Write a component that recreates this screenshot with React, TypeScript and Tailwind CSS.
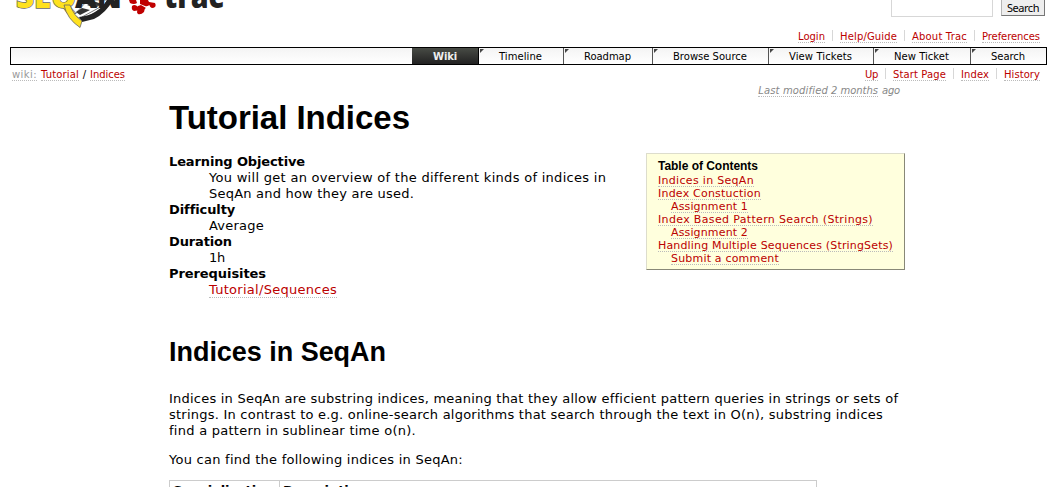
import React from "react";

type LineProps = { children: React.ReactNode; w: number; className?: string };

// One line of text justified to a fixed measure
function Line({ children, w, className = "" }: LineProps) {
  const ref = React.useRef<HTMLSpanElement>(null);
  const [spacing, setSpacing] = React.useState(0);
  React.useLayoutEffect(() => {
    const el = ref.current;
    if (!el) return;
    const n = (el.textContent || "").length;
    setSpacing((w - el.getBoundingClientRect().width) / n);
  }, [w]);
  return (
    <span ref={ref} className={"inline-block whitespace-nowrap " + className} style={{ letterSpacing: spacing }}>
      {children}
    </span>
  );
}

const link = "h-[13px] leading-[14px] text-[#bb0000] border-b border-dotted border-[#bbbbbb]";

function Menu({ items }: { items: [string, number][] }) {
  return (
    <div className="flex">
      {items.map(([t, w], i) => (
        <div key={t} className={"flex h-[13px] " + (i ? "ml-[7px] pl-[7px]" : "")}>
          {i > 0 && <span className="mr-[7px] -ml-[7px] h-[11px] w-px bg-[#d7d7d7]" />}
          <Line w={w} className={link}>{t}</Line>
        </div>
      ))}
    </div>
  );
}

const tabs: [string, string, number][] = [
  ["Timeline", "w-[85px]", 43],
  ["Roadmap", "w-[89px]", 47],
  ["Browse Source", "w-[116px]", 74],
  ["View Tickets", "w-[105px]", 63],
  ["New Ticket", "w-[97px]", 55],
  ["Search", "w-[75px]", 34],
];

const toc: [string, number, boolean][] = [
  ["Indices in SeqAn", 96, false],
  ["Index Constuction", 103, false],
  ["Assignment 1", 77, true],
  ["Index Based Pattern Search (Strings)", 215, false],
  ["Assignment 2", 77, true],
  ["Handling Multiple Sequences (StringSets)", 235, false],
  ["Submit a comment", 108, true],
];

function Logo() {
  return (
    <svg className="block h-[30px] w-[230px]" viewBox="0 0 230 30">
      <path d="M74 15L88 0H108L101 9L82 20Z" fill="#fff" stroke="#333" strokeWidth="0.6" />
      <path d="M76 12L82 8L90 10L80 15Z M87 5L93 1L102 4L95 8Z" fill="#333" />
      <path d="M82 17L104 5M90 3L106 8" fill="none" stroke="#555" strokeWidth="0.8" />
      <path d="M79 17Q98 15 107 0H113Q106 13 94 19L82 22Z" fill="#222" />
      <g fontFamily="Open Sans" fontWeight="800" fontSize="32">
        <text x="16" y="7.5" textLength="60" lengthAdjust="spacingAndGlyphs" fill="#ffe11f" stroke="#666" strokeWidth="1.4" paintOrder="stroke">SEQ</text>
        <text x="75" y="8" textLength="47" lengthAdjust="spacingAndGlyphs" fill="#222">AN</text>
      </g>
      <path d="M64 5Q67 19 80 27.5L82 21Q74 16 70 5Z" fill="#ffe11f" stroke="#666" strokeWidth="0.8" />
      <path d="M129 0H136L137 3Q134 5 130 3ZM132 6Q134 4 137 6L139 8Q138 11 134 11Q131 10 132 6ZM140 0H148L150 4Q148 7 145 6L140 4ZM141 6L145 8L144 12Q141 15 138 14Q136 12 138 10ZM149 2L155 3Q157 7 153 8Q149 8 149 2Z" fill="#c00000" />
      <path d="M138 6L141 5L146 8L140 12L136 10Z" fill="#c00000" />
      <text x="164" y="8" fontFamily="Open Sans" fontWeight="800" fontSize="32" textLength="60" lengthAdjust="spacingAndGlyphs" fill="#222">trac</text>
    </svg>
  );
}

export default function App() {
  return (
    <div className="h-[487px] w-[1057px] overflow-hidden bg-white text-black [font-family:Verdana,'DejaVu_Sans',sans-serif]">
      <header className="flex h-[30px] justify-between">
        <Logo />
        <div className="flex pr-3">
          <div className="mr-[8px] h-[17px] w-[102px] border border-t-0 border-[#d7d7d7]" />
          <div className="flex h-[16px] w-[44px] items-center justify-center border border-t-0 border-[#b5b5b5] border-r-[#777] border-b-[#777] bg-[#eeeeee] text-[11px]">
            <Line w={32} className="pt-[2px] [font-family:'Noto_Sans']">Search</Line>
          </div>
        </div>
      </header>
      <div className="flex h-[17px] justify-end pr-[17px] text-[10px]">
        <Menu items={[["Login", 27], ["Help/Guide", 57], ["About Trac", 55], ["Preferences", 58]]} />
      </div>
      <nav className="ml-[10px] flex h-[18px] w-[1037px] justify-end border border-black bg-linear-to-b from-[#f4f4f4] to-white text-[10px] leading-[18px]">
        <div className="h-4 w-[67px] border-r border-black bg-linear-to-b from-[#484b45] to-[#222] text-center font-bold text-[#eeeeee]">
          <Line w={24}>Wiki</Line>
        </div>
        {tabs.map(([t, cls, w], i) => (
          <div key={t} className={"flex h-4 " + cls + (i < 5 ? " border-r border-[#555]" : "")}>
            <svg className="mt-[1px] ml-[1px] h-1 w-1" viewBox="0 0 4 4"><path d="M0 0H4L0 4Z" fill="#444" /></svg>
            <div className="flex-1 pr-[6px] text-center"><Line w={w}>{t}</Line></div>
          </div>
        ))}
      </nav>
      <div className="flex h-[19px] justify-between pt-[3px] pr-[17px] pl-3 text-[10px]">
        <div className="flex">
          <Line w={25} className={link + " !text-[#999999]"}>wiki:</Line>
          <Line w={38} className={link + " ml-1"}>Tutorial</Line>
          <span className="w-[11px] text-center leading-[14px]">/</span>
          <Line w={35} className={link}>Indices</Line>
        </div>
        <Menu items={[["Up", 13], ["Start Page", 53], ["Index", 28], ["History", 36]]} />
      </div>
      <div className="flex h-[14px] justify-end pr-[157px] text-[10px] text-[#888888] italic">
        <Line w={70} className={link + " !text-[#888888]"}>Last modified</Line>
        <Line w={47} className={link + " ml-[3px] !text-[#888888]"}>2 months</Line>
        <Line w={18} className="ml-1 leading-[14px]">ago</Line>
      </div>
      <main className="ml-[169px] w-[736px]">
        <h1 className="h-[55px] text-[33px] leading-[39px] font-bold [font-family:'Liberation_Sans',sans-serif]"><Line w={241}>Tutorial Indices</Line></h1>
        <div className="flex h-[183px] justify-between">
          <dl className="pt-[1px] text-[13px] leading-[16px]">
            <dt className="font-bold"><Line w={136}>Learning Objective</Line></dt>
            <dd className="ml-10 h-8"><Line w={397}>You will get an overview of the different kinds of indices in</Line><br /><Line w={205}>SeqAn and how they are used.</Line></dd>
            <dt className="font-bold"><Line w={65}>Difficulty</Line></dt>
            <dd className="ml-10"><Line w={55}>Average</Line></dd>
            <dt className="font-bold"><Line w={63}>Duration</Line></dt>
            <dd className="ml-10"><Line w={16}>1h</Line></dd>
            <dt className="font-bold"><Line w={97}>Prerequisites</Line></dt>
            <dd className="ml-10"><Line w={128} className={link + " !h-4 !leading-[16px]"}>Tutorial/Sequences</Line></dd>
          </dl>
          <aside className="h-[117px] w-[259px] border border-[#ddddcc] border-r-[#888877] border-b-[#888877] bg-[#ffffdd] pt-[6px] pl-[11px] text-[11px] leading-[13px]">
            <h4 className="h-[14px] text-[12px] font-bold [font-family:'Liberation_Sans',sans-serif]"><Line w={100}>Table of Contents</Line></h4>
            {toc.map(([t, w, sub], i) => (
              <div key={i} className={"flex h-[13px] " + (sub ? "ml-[13px]" : "")}><Line w={w} className={link}>{t}</Line></div>
            ))}
          </aside>
        </div>
        <h2 className="h-[55px] text-[27px] leading-[33px] font-bold [font-family:'Liberation_Sans',sans-serif]"><Line w={217}>Indices in SeqAn</Line></h2>
        <div className="text-[13px] leading-[16px]">
          <p className="h-[61px]">
            <Line w={729}>Indices in SeqAn are substring indices, meaning that they allow efficient pattern queries in strings or sets of</Line><br />
            <Line w={714}>strings. In contrast to e.g. online-search algorithms that search through the text in O(n), substring indices</Line><br />
            <Line w={247}>find a pattern in sublinear time o(n).</Line>
          </p>
          <p className="h-[28px]"><Line w={294}>You can find the following indices in SeqAn:</Line></p>
          <div className="flex h-6 w-[648px] border border-[#cccccc] font-bold">
            <div className="w-[110px] border-r border-[#cccccc] pt-[2px] pl-[3px]"><Line w={101}>Specialization</Line></div>
            <div className="pt-[2px] pl-[3px]"><Line w={84}>Description</Line></div>
          </div>
        </div>
      </main>
    </div>
  );
}
